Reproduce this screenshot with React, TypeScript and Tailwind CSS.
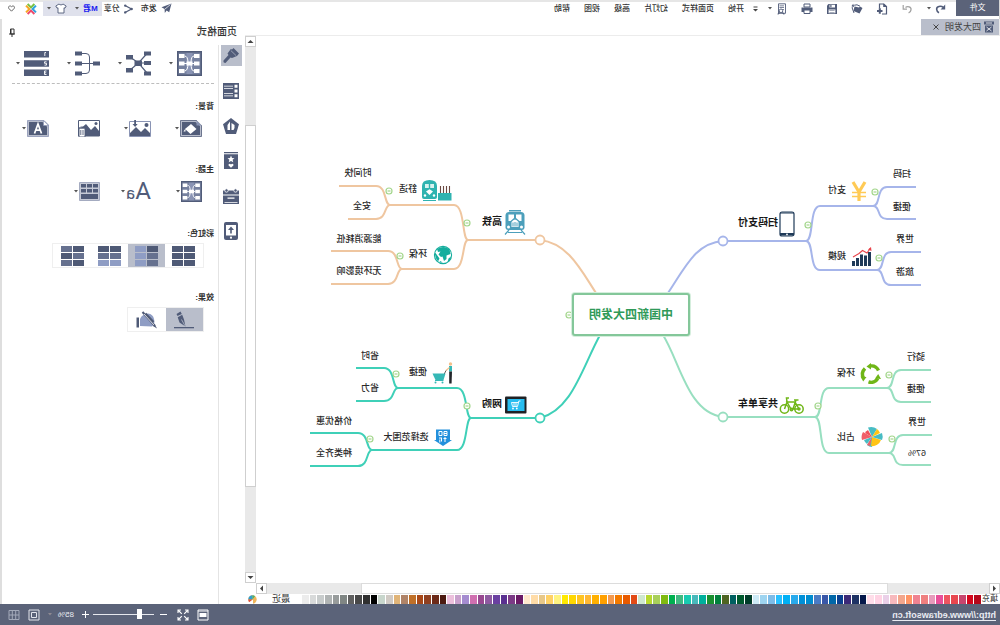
import React from "react";

const INK = "#515c79";

type IconProps = { w: number; h: number; box?: string; children: React.ReactNode };

function Icon({ w, h, box, children }: IconProps) {
  return (
    <svg width={w} height={h} viewBox={box ?? `0 0 ${w} ${h}`} fill={INK} className="block shrink-0" aria-hidden="true">
      {children}
    </svg>
  );
}

function Caret() {
  return (
    <Icon w={4} h={3}>
      <path d="M0 0h4L2 2.6z" fill="#555" />
    </Icon>
  );
}

/* ---------- top bar ---------- */

const quickIcons: { label: string; icon: React.ReactNode }[] = [
  {
    label: "新建",
    icon: (
      <Icon w={12} h={12}>
        <path d="M6 11H1.500V3.500L4.200 1H8.500V5.500" fill="none" stroke={INK} strokeWidth="1.200" />
        <path d="M1 4L4.800 0.600V4z" />
        <path d="M6 8h5.500M8.700 5.300v5.500" stroke={INK} strokeWidth="2" fill="none" transform="translate(-0.500 0)" />
      </Icon>
    ),
  },
  {
    label: "打开",
    icon: (
      <Icon w={12} h={12}>
        <path d="M0.500 5L3 3.500L4 4.500L8.500 3.500L9.500 8L3.500 10.500z" />
        <path d="M3 3.200L6 1.800L8.500 2.200L11 4.500L9 10" fill="none" stroke={INK} strokeWidth="1" />
        <path d="M9.800 0.800l1.800 2.400l-2.600 0.200z" />
      </Icon>
    ),
  },
  {
    label: "保存",
    icon: (
      <Icon w={12} h={12}>
        <path d="M1 1h8.500L11 2.500V11H1z" />
        <path d="M3 1.800h5.500V4.600H3zM2.600 6.400h6.800V10.200H2.600z" fill="#fff" />
        <path d="M6.500 2h1.200v2.200H6.500zM3.400 7.400h5.200v0.700H3.400zM3.400 8.900h5.200v0.700H3.400z" />
      </Icon>
    ),
  },
  {
    label: "打印",
    icon: (
      <Icon w={12} h={12}>
        <path d="M3 1h6v3H3z" fill="#fff" stroke={INK} strokeWidth="1" />
        <path d="M0.500 4.500h11V9H0.500z" />
        <path d="M3 7h6v3.500H3z" fill="#fff" stroke={INK} strokeWidth="1" />
      </Icon>
    ),
  },
  {
    label: "预览",
    icon: (
      <Icon w={12} h={12}>
        <path d="M2.500 0.800h7v9.500h-7z" fill="#fff" stroke={INK} strokeWidth="0.900" />
        <path d="M4 2.500h4.500v0.800H4zM4 4.200h4.500V5H4zM4 6h3v0.800H4z" />
        <circle cx="7" cy="7.800" r="1.800" fill="#fff" stroke={INK} strokeWidth="0.900" />
        <path d="M8.300 9.300l2 2M5.700 9.300l-2 2" stroke={INK} strokeWidth="1.100" />
      </Icon>
    ),
  },
];

function TopBar() {
  return (
    <header className="flex h-[19px] border-l border-[#d4d4d4] text-[8px] leading-4 text-[#333]">
      <button className="h-4 w-[43px] bg-[#5b6379] text-white">文件</button>
      <div className="flex min-w-0 flex-1 items-center border-t-2 border-[#e6e6e6] pb-1">
        <button aria-label="撤销" className="ml-[5px] flex w-5 justify-center">
          <Icon w={11} h={10}>
            <path d="M2.500 3.500C5 1.500 9.800 2 9.300 5.500C9.200 7 8 8.300 7 8.800" fill="none" stroke={INK} strokeWidth="1.600" />
            <path d="M0.800 0.600V5.500H5.400z" />
          </Icon>
        </button>
        <button aria-label="撤销列表" className="flex w-1 justify-center">
          <Caret />
        </button>
        <button aria-label="恢复" className="ml-2 flex w-[22px] justify-center">
          <Icon w={11} h={10}>
            <path d="M7.500 3.500C5.500 1.800 1.500 3 2 5.800C2.200 7.500 3.400 8.400 4.400 8.800" fill="none" stroke="#a2a2a2" strokeWidth="1.300" />
            <path d="M9.800 1V5.200H6" fill="none" stroke="#a2a2a2" strokeWidth="1.200" />
          </Icon>
        </button>
        <div className="ml-0.5 flex">
          {quickIcons.map((q) => (
            <button key={q.label} aria-label={q.label} className="flex w-[25px] justify-center">
              {q.icon}
            </button>
          ))}
        </div>
        <button aria-label="预览列表" className="-ml-0.5 flex w-1 justify-center">
          <Caret />
        </button>
        <button aria-label="更多" className="flex w-6 justify-center">
          <Icon w={5} h={6}>
            <path d="M0.500 0.500h4v1h-4zM0 3h5L2.500 5.500z" fill="#444" />
          </Icon>
        </button>
        <nav className="flex gap-3.5">
          {["开始", "页面样式", "幻灯片", "高级", "视图", "帮助"].map((m) => (
            <button key={m} className="font-medium whitespace-nowrap">
              {m}
            </button>
          ))}
        </nav>
        <div className="ml-auto flex items-center pr-1">
          <button className="flex items-center gap-1 font-medium whitespace-nowrap">
            <Icon w={11} h={11}>
              <path d="M10.500 0.500L0.500 4.200L3.600 6L3.800 10L5.600 7.400L8.200 9.200z" transform="translate(11 0) scale(-1 1)" />
              <path d="M1.500 1.500L7.200 6.200" stroke="#fff" strokeWidth="0.700" />
            </Icon>
            发布
          </button>
          <button className="ml-2 flex items-center gap-1 font-medium whitespace-nowrap">
            <Icon w={9} h={10}>
              <path d="M8 1.500L1.500 5L8 8.500" fill="none" stroke={INK} strokeWidth="1.300" />
              <circle cx="7.800" cy="1.600" r="1.200" />
              <circle cx="1.500" cy="5" r="1.300" />
              <circle cx="7.800" cy="8.400" r="1.200" />
            </Icon>
            分享
          </button>
          <div className="ml-0.5 flex h-[15px] items-center bg-[#dfe1ec] px-1">
            <button className="flex items-center gap-1 font-bold whitespace-nowrap text-[#1c1cf0]">
              M君 <Caret />
            </button>
            <button aria-label="皮肤" className="ml-2 flex items-center gap-1">
              <Icon w={12} h={11}>
                <path
                  d="M4 1C5 2.200 7 2.200 8 1L11.200 3L10 5.200L9 4.800V10H3V4.800L2 5.200L0.800 3z"
                  fill="#fff"
                  stroke={INK}
                  strokeWidth="0.900"
                />
              </Icon>
              <Caret />
            </button>
          </div>
          <button aria-label="亿图" className="ml-1.5">
            <Icon w={12} h={12}>
              <g fill="none" strokeWidth="2">
                <path d="M2.600 1L6 4.400L9.400 1" stroke="#7ac143" />
                <path d="M11 2.600L7.600 6L11 9.400" stroke="#f7a823" />
                <path d="M2.600 11L6 7.600L9.400 11" stroke="#ef4a6b" />
                <path d="M1 2.600L4.400 6L1 9.400" stroke="#2fa4e0" />
              </g>
            </Icon>
          </button>
          <button aria-label="收藏" className="mr-1 ml-2.5">
            <Icon w={7} h={7}>
              <path d="M3.500 6.200L0.800 3.400C-0.200 1.600 2 -0.200 3.500 1.800C5 -0.200 7.200 1.600 6.200 3.400z" fill="none" stroke="#555" strokeWidth="0.900" />
            </Icon>
          </button>
        </div>
      </div>
    </header>
  );
}

/* ---------- mind map ---------- */

type Fork = { x: number; y: number; dir: 1 | -1; arms: [number, number][] };
type Branch = { color: string; hub: [number, number]; link: string; forks: Fork[] };

const branches: Branch[] = [
  {
    color: "#a6b5ea",
    hub: [277, 241],
    link: "M277 241C304 243 314 266 332 293",
    forks: [
      { x: 194, y: 241, dir: -1, arms: [[206, 127], [270, 123]] },
      { x: 127, y: 206, dir: -1, arms: [[187, 84], [219, 84]] },
      { x: 123, y: 270, dir: -1, arms: [[252, 79], [285, 79]] },
    ],
  },
  {
    color: "#98dfc0",
    hub: [277, 417],
    link: "M277 417C312 413 320 362 337 335",
    forks: [
      { x: 185, y: 417, dir: -1, arms: [[388, 113], [453, 111]] },
      { x: 113, y: 388, dir: -1, arms: [[370, 69], [402, 69]] },
      { x: 111, y: 453, dir: -1, arms: [[435, 68], [465, 69]] },
    ],
  },
  {
    color: "#efc6a0",
    hub: [460, 240],
    link: "M460 240C432 243 419 270 404 293",
    forks: [
      { x: 532, y: 240, dir: 1, arms: [[205, 610], [269, 598]] },
      { x: 610, y: 205, dir: 1, arms: [[186, 661], [219, 652]] },
      { x: 598, y: 269, dir: 1, arms: [[251, 669], [284, 669]] },
    ],
  },
  {
    color: "#3fd0b8",
    hub: [460, 418],
    link: "M460 418C428 410 418 368 400 335",
    forks: [
      { x: 529, y: 418, dir: 1, arms: [[388, 602], [450, 628]] },
      { x: 602, y: 388, dir: 1, arms: [[368, 644], [401, 644]] },
      { x: 628, y: 450, dir: 1, arms: [[433, 690], [466, 690]] },
    ],
  },
];

function armPath(f: Fork, y: number, end: number) {
  const d = f.dir;
  return `M${f.x} ${f.y}C${f.x - 1 + 7 * d} ${f.y} ${f.x + 3 * d} ${y} ${f.x + 14 * d} ${y}H${end}`;
}

const topics: [string, number, number][] = [
  ["扫码支付", 242, 223],
  ["共享单车", 242, 404],
  ["高铁", 508, 222],
  ["网购", 508, 404],
];

const subtopics: [string, number, number][] = [
  ["支付", 163, 190],
  ["扫码", 98, 174],
  ["便捷", 98, 207],
  ["规模", 163, 256],
  ["世界", 95, 239],
  ["旅游", 95, 272],
  ["环保", 154, 373],
  ["骑行", 84, 357],
  ["便捷", 84, 389],
  ["占比", 154, 437],
  ["世界", 83, 422],
  ["67%", 83, 453],
  ["舒适", 592, 189],
  ["时间快", 642, 173],
  ["安全", 638, 206],
  ["环保", 582, 254],
  ["能源消耗低", 641, 239],
  ["无环境影响", 641, 271],
  ["便捷", 582, 372],
  ["省时", 630, 356],
  ["省力", 630, 388],
  ["选择范围大", 594, 437],
  ["价格优惠", 666, 421],
  ["种类齐全", 666, 453],
];

const toggles: [number, number][] = [
  [192, 225], [125, 192], [121, 258], [182, 406], [111, 375], [108, 439],
  [533, 223], [611, 191], [600, 256], [533, 406], [604, 374], [630, 439], [431, 315],
];

const CANVAS_TOP = 36;

function TopicIcons() {
  return (
    <>
      <g transform="translate(213 224)">
        <rect x="-7" y="-12" width="14" height="24" rx="2" fill="#fff" stroke="#1f3a58" strokeWidth="1.200" />
        <path d="M-7 -11.500h14v1h-14zM-7 9h14v2.500h-14z" fill="#1f3a58" />
        <circle cy="10.400" r="0.900" fill="#fff" />
      </g>
      <g transform="translate(141 191)" fill="none" stroke="#ffca55">
        <path d="M-6 -9L0 1L6 -9M0 0V10" strokeWidth="3.200" />
        <path d="M-7 1.500H7M-7 5.500H7" strokeWidth="1.700" />
      </g>
      <g transform="translate(138 257)">
        <path d="M-9 -5h3V9h-3zM-5 -1.500h3V9h-3zM-1 -2.500h3V9h-3zM3 1h3V9h-3zM7 4h3V9h-3z" fill="#1f3a58" />
        <path d="M-8.500 -9L-5 -4L-0.500 -6.500L3 -3.500L9 0" fill="none" stroke="#e8434a" strokeWidth="1.100" />
        <path d="M-9 -10l-0.500 4l3.500 -1.500z" fill="#e8434a" />
      </g>
      <g transform="translate(208 406)" fill="none" stroke="#6fb617" strokeWidth="1.500">
        <circle cx="-7" cy="3" r="4.200" />
        <circle cx="7.500" cy="3" r="4.200" />
        <path d="M-7 3L-3 -4H5L1 3H-7M5 -4L7.500 3M-1 3L-4 -6M-6.500 -6H-2M3 -8H5.500L5 -4" />
        <circle cx="-7" cy="3" r="1" />
        <circle cx="0.500" cy="3.500" r="1.200" />
      </g>
      <g transform="translate(129 374)" fill="none" stroke="#6fb617" strokeWidth="3.400">
        <path d="M-7.500 -3.500A8 8 0 0 1 1 -8" />
        <path d="M6 -5.500A8 8 0 0 1 7.500 4" />
        <path d="M2.500 7.900A8 8 0 0 1 -6.800 4.500" />
        <g fill="#6fb617" stroke="none">
          <path d="M0 -11L4.500 -7.500L0 -4.500z" />
          <path d="M4.500 3L10.500 2.500L7.800 7.500z" />
          <path d="M-10 5L-7.200 0L-4 4.500z" />
        </g>
      </g>
      <g transform="translate(128 437)">
        <path d="M0 0L-5 -8A9.500 9.500 0 0 1 4 -9.500z" fill="#48bcc4" />
        <path d="M0 0L4 -7A8 8 0 0 1 7 -4z" fill="#f0505a" />
        <path d="M0 0L9 -5A10 10 0 0 1 10 3z" fill="#f0606a" />
        <path d="M0 0L8 3A8 8 0 0 1 5 7z" fill="#48bcc4" />
        <path d="M0 0L5 8A9 9 0 0 1 0 10z" fill="#48bcc4" />
        <path d="M0 0L1 9A9 9 0 0 1 -9 3z" fill="#ffc414" />
        <path d="M0 0L-10 3A10 10 0 0 1 -10 -4z" fill="#48bcc4" />
        <path d="M0 0L-8 -4A9 9 0 0 1 -5 -8z" fill="#ffc414" />
        <path d="M0 0L5 8L2 9z" fill="#f0606a" />
      </g>
      <g transform="translate(485 222)" fill="#4c9fbb">
        <path d="M-6 -12h12v1.500h-12z" />
        <path d="M-9.500 -7Q-9 -10 -6 -10H6Q9 -10 9.500 -7V6Q9 8 7 8H-7Q-9 8 -9.500 6z" />
        <path d="M-6.500 -7.500H-1V-4L-4.500 -1H-6.500zM6.500 -7.500H1V-4L4.500 -1H6.500zM-3.500 0Q0 -5 3.500 0V5H-3.500z" fill="#fff" />
        <path d="M-2.500 0.500h1v4h-1zM-0.500 0h1v4.500h-1zM1.500 0.500h1v4h-1z" />
        <circle cx="-6.500" cy="5" r="1.500" fill="#fff" />
        <circle cx="6.500" cy="5" r="1.500" fill="#fff" />
        <path d="M-6 8L-10 12.500M6 8L10 12.500M-7 10.500H7" fill="none" stroke="#4c9fbb" strokeWidth="1.200" />
      </g>
      <g transform="translate(563 190)">
        <path d="M-14.500 3H-1V10.500H-14.500z" fill="#2fb3b0" />
        <path d="M-12.500 -4V3M-9.500 -4V3M-6.500 -4V3M-3.500 -4V3" stroke="#6b4a42" strokeWidth="1.100" />
        <path d="M0 7V-4Q0 -10 7.500 -10Q15 -10 15 -4V7Q15 9 13 9H2Q0 9 0 7z" fill="#2fb3b0" />
        <path d="M3 -6H6.800V-2H3zM8.200 -6H12V-2H8.200z" fill="#d8f3f0" />
        <path d="M4 1.500L7.500 -0.800L11 1.500L7.500 5z" fill="#fff" />
        <circle cx="3" cy="5.500" r="1.200" fill="#fff" />
        <circle cx="12" cy="5.500" r="1.200" fill="#fff" />
        <path d="M1 10.500H14" stroke="#2fb3b0" strokeWidth="1" />
      </g>
      <g transform="translate(557 255)">
        <circle r="8.600" fill="#fff" stroke="#14ad9d" strokeWidth="1.100" />
        <path d="M-6.500 -5.500Q-1 -10 6 -6L5 -3L2.500 -3.500L4.500 -0.500L2 2L0.500 1.500L-1 6L-3.500 4L-3.500 0.500L-7.500 -1z" fill="#14ad9d" />
        <path d="M7.800 -2.500Q8.800 2 5 6.500L3.500 3.500zM-8 1.500L-5.500 3.500L-4.500 7Q-7.500 5.500 -8 1.500zM0 7.500L3 6L3.500 7.500z" fill="#14ad9d" />
      </g>
      <g transform="translate(484 405)">
        <rect x="-10.500" y="-8.500" width="21.500" height="17" rx="1" fill="#1f2124" />
        <rect x="-8.500" y="-6" width="17" height="12" fill="#27bdf0" />
        <path d="M-4.500 -4H-2.800L-1.500 1.500H3.500L4.500 -2.500H-2.400M0 -2V1M2 -2V1" fill="none" stroke="#fff" strokeWidth="0.900" />
        <circle cx="-0.800" cy="3.500" r="0.900" fill="#fff" />
        <circle cx="3" cy="3.500" r="0.900" fill="#fff" />
      </g>
      <g transform="translate(558 373)">
        <circle cx="-8.500" cy="-9" r="1.700" fill="#f4c08b" />
        <path d="M-10 -7h3v5.500h-3z" fill="#35b8b6" />
        <path d="M-7.500 -5.500L-4 -2.500" stroke="#f4c08b" strokeWidth="1.200" />
        <path d="M-10 -1.500h2.800V10.500h-2.400z" fill="#23262b" />
        <path d="M-4 -2.500L-2 1.500" stroke="#333" strokeWidth="0.800" />
        <path d="M-3.500 0.500H9.500L6.500 7H-1.500z" fill="#35b8b6" />
        <path d="M-1.500 7.500H7" stroke="#35b8b6" strokeWidth="1" />
        <circle cx="-0.500" cy="9.500" r="1" fill="#35b8b6" />
        <circle cx="6.500" cy="9.500" r="1" fill="#35b8b6" />
      </g>
      <g transform="translate(557 437)">
        <path d="M-7 -7.500H7V3H9L0 9L-9 3H-7z" fill="#2290dc" />
        <g fill="none" stroke="#fff" strokeWidth="1">
          <path d="M-4 -5.500h3v2h-3zM-4 -3.500h3v2h-3zM1 -5.500h3v4h-3z" />
          <path d="M-3.500 1.500h3M-2 0v5M1 1h3M1.500 1v3.500M3.200 2.500v3" />
        </g>
      </g>
    </>
  );
}

function MindMap() {
  return (
    <div className="relative h-[547px] w-[744px]">
      <svg width="744" height="547" viewBox="0 36 744 547" className="block" aria-hidden="true">
        {branches.map((b) => (
          <g key={b.color} fill="none" stroke={b.color} strokeWidth="2">
            <path d={b.link} />
            <path d={`M${b.hub[0]} ${b.hub[1]}H${b.forks[0].x}`} />
            {b.forks.map((f) => f.arms.map(([y, end]) => <path key={`${f.x}-${y}`} d={armPath(f, y, end)} />))}
            <circle cx={b.hub[0]} cy={b.hub[1]} r="4.500" fill="#fff" strokeWidth="1.800" />
          </g>
        ))}
        {toggles.map(([x, y]) => (
          <g key={`${x}-${y}`} fill="#fff" stroke="#a3d68c" strokeWidth="1.200">
            <circle cx={x} cy={y} r="3" />
            <path d={`M${x - 1.5} ${y}h3`} />
          </g>
        ))}
        <TopicIcons />
      </svg>
      <div className="absolute top-[257px] left-[310px] flex h-[43px] w-[118px] items-center justify-center rounded-[3px] border-2 border-[#84c79a] bg-white text-[12px] font-bold whitespace-nowrap text-[#2f9a58] ring-1 ring-[#d5eedd]">
        中国新四大发明
      </div>
      {topics.map(([t, x, y]) => (
        <span
          key={t}
          className="absolute -translate-x-1/2 -translate-y-1/2 text-[10px] leading-3 font-bold whitespace-nowrap text-[#161616]"
          style={{ left: x, top: y - CANVAS_TOP }}
        >
          {t}
        </span>
      ))}
      {subtopics.map(([t, x, y]) => (
        <span
          key={`${t}${x}-${y}`}
          className="absolute -translate-x-1/2 -translate-y-1/2 text-[9px] leading-3 font-medium whitespace-nowrap text-[#2a2a2a]"
          style={{ left: x, top: y - CANVAS_TOP }}
        >
          {t}
        </span>
      ))}
    </div>
  );
}

/* ---------- workspace ---------- */

function ScrollButton({ label, d }: { label: string; d: string }) {
  return (
    <button aria-label={label} className="flex size-[11px] shrink-0 items-center justify-center border border-[#cfcfcf] bg-white">
      <Icon w={7} h={7}>
        <path d={d} fill="#444" />
      </Icon>
    </button>
  );
}

const swatches = [
  "#b5071b", "#d4061c", "#c8466e", "#e8474f", "#ee5560", "#e8509a", "#e79abb", "#ef7f7f", "#ef8391", "#ff9566",
  "#f3a68c", "#f7b9bd", "#ead0e8", "#ffd3e4", "#ffdde9", "#05184a", "#1e3264", "#3c2a78", "#0a4090", "#0067a8",
  "#3957a8", "#4a7bc4", "#008ccf", "#0090d8", "#28aaec", "#00b0f5", "#28c0ff", "#7dbce8", "#9ed4f0", "#cdeaf6",
  "#003c28", "#005a2d", "#006060", "#4f6422", "#00803c", "#1a9030", "#00b09c", "#48b9bb", "#18cab0", "#40b880",
  "#00b050", "#80ba10", "#a8cf5a", "#b8d830", "#cfe8cf", "#e24a16", "#e85a00", "#f37a00", "#f39a50", "#ffa000",
  "#ffb000", "#ffb833", "#ffc422", "#ffd700", "#ffe900", "#fff380", "#ffd166", "#e8c888", "#ffdca8", "#ffe8cc",
  "#6a1a66", "#7c3a86", "#5a3090", "#6a40a0", "#8e5aa0", "#984890", "#d070b0", "#a58cd0", "#c8a0cc", "#ecc0dc",
  "#4c1a10", "#6c2a18", "#904020", "#a84818", "#c07028", "#b08468", "#e0b478", "#d0cac4", "#c8d6cc", "#000000",
  "#303030", "#484848", "#606060", "#808684", "#989c9c", "#b0b4b4", "#c8cccc", "#d8dada", "#ececec",
];

function Workspace() {
  return (
    <main className="flex min-w-0 flex-1 flex-col">
      <div className="flex h-[17px] border-b border-l border-[#ececec]">
        <div className="flex h-4 w-[78px] items-center bg-[#b9becb] pl-1 text-[9px] leading-4 text-[#444]">
          <Icon w={12} h={12}>
            <path d="M1 0.500h10v3h-10zM2 4.500h8v7H2z" />
            <path d="M3.500 6L8.500 10M8.500 6L3.500 10M3 2h6" stroke="#fff" strokeWidth="0.800" />
          </Icon>
          <span className="ml-0.5 whitespace-nowrap">四大发明</span>
          <button aria-label="关闭" className="ml-1.5">
            <Icon w={6} h={6}>
              <path d="M0.500 0.500L5.500 5.500M5.500 0.500L0.500 5.500" stroke="#444" strokeWidth="1" />
            </Icon>
          </button>
        </div>
      </div>
      <div className="flex flex-1">
        <div className="min-w-0 flex-1 overflow-hidden">
          <MindMap />
        </div>
        <div className="flex w-[11px] flex-col bg-[#e9e9e9]">
          <ScrollButton label="向上" d="M0.500 5L3.500 2L6.500 5z" />
          <div className="flex-[78]" />
          <div className="flex-[362] border border-[#cfcfcf] bg-white" />
          <div className="flex-[85]" />
          <ScrollButton label="向下" d="M0.500 2L3.500 5L6.500 2z" />
        </div>
      </div>
      <div className="mr-[11px] flex h-[11px] bg-[#e9e9e9]">
        <ScrollButton label="向左" d="M5 0.500L2 3.500L5 6.500z" />
        <div className="flex-[101]" />
        <div className="flex-[526] border border-[#dcdcdc] bg-white" />
        <div className="flex-[94]" />
        <ScrollButton label="向右" d="M2 0.500L5 3.500L2 6.500z" />
      </div>
      <div className="flex h-2.5 items-center text-[8px] leading-[10px] text-[#333]">
        <span className="w-[19px] pl-0.5 whitespace-nowrap">填充</span>
        <div className="flex h-[9px] flex-1 gap-px">
          {swatches.map((c) => (
            <button key={c} aria-label={c} className="h-full flex-1" style={{ backgroundColor: c }} />
          ))}
        </div>
        <div className="flex w-[57px] items-center justify-between pr-[3px] pl-3 text-[9px]">
          <span>最近</span>
          <button aria-label="调色板">
            <Icon w={9} h={9}>
              <circle cx="4.500" cy="4.500" r="4.200" fill="#f0b65a" />
              <path d="M4.500 4.500V0.300A4.200 4.200 0 0 1 8.700 4.500z" fill="#2f9fd0" />
              <path d="M4.500 4.500H8.700A4.200 4.200 0 0 1 7.500 7.500z" fill="#e24c3b" />
              <path d="M4.500 4.500L2 1.200A4.200 4.200 0 0 1 4.500 0.300z" fill="#45b072" />
              <path d="M4 4.500L9 8V9H4z" fill="#fff" />
            </Icon>
          </button>
        </div>
      </div>
    </main>
  );
}

/* ---------- format panel ---------- */

const stripTools: { label: string; icon: React.ReactNode }[] = [
  {
    label: "页面格式",
    icon: (
      <Icon w={18} h={18}>
        <path d="M1 6.500L6.500 1L8 2.500L9.200 2L12.500 6.500L11.500 8L16.500 13.500Q17 16 14.500 16L9.500 10.500L8 11L3 9z" />
        <path d="M9.200 3.500L3.800 8.700" stroke="#b9becb" strokeWidth="0.700" />
      </Icon>
    ),
  },
  {
    label: "图层",
    icon: (
      <Icon w={16} h={16}>
        <path d="M0 0h16v16H0z" />
        <path d="M1.500 1.800h3v3h-3zM1.500 6.500h3v3h-3zM1.500 11.200h3v3h-3zM6 2.800h9v0.800H6zM6 5.200h9V6H6zM6 10h9v0.800H6zM6 12.500h9v0.800H6z" fill="#fff" />
      </Icon>
    ),
  },
  {
    label: "图标",
    icon: (
      <Icon w={16} h={16}>
        <path d="M8 0L16 6.200L13 16H3L0 6.200z" />
        <path d="M9 3.500L11.500 7V12H9zM4.500 7L7.500 5V12H5.500Q4 10 4.500 7z" fill="#fff" />
      </Icon>
    ),
  },
  {
    label: "剪贴画",
    icon: (
      <Icon w={14} h={17}>
        <path d="M0 0h14v1.200H0zM0 2.200h14V17H0z" />
        <path d="M7 3.500L8 6L10.500 6.200L8.600 7.800L9.300 10.200L7 9L4.700 10.200L5.400 7.800L3.500 6.200L6 6zM7 15.800L4.600 13.500C4 11.800 6 11 7 12.500C8 11 10 11.800 9.400 13.500z" fill="#fff" />
      </Icon>
    ),
  },
  {
    label: "任务",
    icon: (
      <Icon w={16} h={16}>
        <path d="M0 2.500h16v4H0zM0 7.500h16V16H0z" />
        <path d="M4.500 9.500h7v1.200h-7zM1.500 14h13v0.700h-13z" fill="#fff" />
        <circle cx="3.500" cy="2.500" r="1.700" stroke="#fff" strokeWidth="0.800" />
        <circle cx="12.500" cy="2.500" r="1.700" stroke="#fff" strokeWidth="0.800" />
      </Icon>
    ),
  },
  {
    label: "附件",
    icon: (
      <Icon w={14} h={18}>
        <rect width="14" height="18" rx="2" />
        <path d="M2 3h10v10.500H2z" fill="#fff" />
        <path d="M7 4.500L10 8H7.800V11.500H6.200V8H4z" />
        <circle cx="7" cy="15.700" r="1.100" fill="#fff" />
      </Icon>
    ),
  },
];

function LayoutGlyph({ size }: { size: number }) {
  return (
    <Icon w={size} h={size} box="0 0 25 25">
      <path d="M0 0h25v25H0z" />
      <path d="M1.500 1.500h22v22h-22z" fill="#76819f" />
      <path d="M9.500 2h6v21h-6z" fill="#8a94b4" />
      <path d="M2.500 3h5.500v4H2.500zM2.500 10.500h5.500v4H2.500zM2.500 18h5.500v4H2.500zM17.500 3h5.500v4h-5.500zM17.500 10.500h5.500v4h-5.500zM17.500 18h5.500v4h-5.500zM9.500 10.500h6v4h-6z" fill="#fff" />
      <path d="M8 5Q11 5 11 12Q11 20 8 20M17.500 5Q14 5 14 12Q14 20 17.500 20M8 12.500H18" fill="none" stroke="#fff" strokeWidth="1" />
    </Icon>
  );
}

type Tool = { label: string; icon: React.ReactNode; plain?: boolean };

const layoutTools: Tool[] = [
  { label: "布局", icon: <LayoutGlyph size={25} /> },
  {
    label: "连线样式",
    icon: (
      <Icon w={25} h={25}>
        <path d="M4 2.500L12.500 12L21 6M4 22L12.500 12L21 19M4 12H12" fill="none" stroke={INK} strokeWidth="1.200" />
        <path d="M0 0.500h7v4H0zM0 10h7v4H0zM0 20.500h7v4H0zM18 4h7v4.500h-7zM18 17h7v4.500h-7zM9 9.500h7.500v5.500H9z" />
      </Icon>
    ),
  },
  {
    label: "分支结构",
    icon: (
      <Icon w={25} h={25}>
        <path d="M5 12.500H20M19 2.500H14Q10.500 2.500 10.500 6V19Q10.500 22.500 14 22.500H19" fill="none" stroke={INK} strokeWidth="1" />
        <path d="M0 10.500h7v4H0zM18 0.500h7v4h-7zM18 10.500h7v4h-7zM18 20.500h7v4h-7z" />
      </Icon>
    ),
  },
  {
    label: "编号",
    icon: (
      <Icon w={25} h={25}>
        <path d="M0 0h25v6.500H0zM0 9.300h25v6.500H0zM0 18.500h25V25H0z" />
        <path d="M3 1.500h1.200v3.500M2.500 10.800h2v1.500h-2v1.800h2M2.500 20h2v3.500h-2M2.800 21.800h1.600" fill="none" stroke="#fff" strokeWidth="0.900" />
      </Icon>
    ),
  },
];

const backgroundTools: Tool[] = [
  {
    label: "背景颜色",
    icon: (
      <Icon w={22} h={17}>
        <path d="M0.500 5L5 0.500H21.500V16.500H0.500z" fill="#b7bccb" stroke={INK} strokeWidth="0.800" />
        <path d="M2 6L6.500 2H20V15H2z" />
        <path d="M5.500 9L11 4L17 9L11.500 14z" fill="#fff" />
        <path d="M16.500 8.500l2 3h-2z" fill="#fff" />
        <path d="M0 0H5.500L0 5.500z" fill="#fff" />
        <path d="M0.600 5.500L5.500 0.600V5.500z" fill="#8a94b4" />
      </Icon>
    ),
  },
  {
    label: "插入图片",
    icon: (
      <Icon w={22} h={17}>
        <path d="M0.500 1.500h21v15H0.500z" fill="#fff" stroke="#8a94b4" strokeWidth="1" />
        <path d="M1 16V13L6 8L10 12L15 7L21 13V16z" />
        <circle cx="4.500" cy="5" r="2" />
        <path d="M15 0h1.800v4h1.700L15.900 7L13.300 4H15z" />
      </Icon>
    ),
  },
  {
    label: "移除背景",
    plain: true,
    icon: (
      <Icon w={22} h={17}>
        <path d="M0.500 0.500h21v15.500H0.500z" fill="#fff" stroke={INK} strokeWidth="1" />
        <path d="M1 16V11L5 6L9 10L14 4L21 10V16z" />
        <circle cx="4" cy="3.500" r="1.500" />
        <path d="M15 8h6v9h-6z" fill="#fff" stroke={INK} strokeWidth="0.900" />
        <path d="M14 8h8M16.500 7h3M17 10v5M19.200 10v5" stroke={INK} strokeWidth="0.900" />
      </Icon>
    ),
  },
  {
    label: "水印",
    icon: (
      <Icon w={22} h={17}>
        <path d="M0.500 5L5 0.500H21.500V16.500H0.500z" fill="#b7bccb" stroke="#8a94b4" strokeWidth="0.800" />
        <path d="M2 6.500L6.500 2H20V15H2z" />
        <path d="M7.500 13.500L11 4L14.500 13.500M9 10.200H13" fill="none" stroke="#fff" strokeWidth="1.700" />
        <path d="M0.600 5.500L5.500 0.600V5.500z" fill="#fff" stroke="#8a94b4" strokeWidth="0.700" />
      </Icon>
    ),
  },
];

const themeTools: Tool[] = [
  { label: "主题样式", icon: <LayoutGlyph size={21} /> },
  {
    label: "主题字体",
    icon: (
      <span className="flex h-6 items-baseline font-['Roboto',sans-serif] leading-6 text-[#515c79]">
        <span className="text-[24px]">A</span>
        <span className="text-[17px]">a</span>
      </span>
    ),
  },
  {
    label: "主题颜色",
    icon: (
      <Icon w={21} h={19}>
        <path d="M0.500 0.500h20v18h-20z" fill="#c6cad6" stroke="#a4abc0" strokeWidth="1" />
        <path d="M2 2h5v3.500H2zM8 2h5v3.500H8zM14 2h5v3.500h-5zM2 7h5v3.500H2zM8 7h5v3.500H8zM14 7h5v3.500h-5zM2 12h17v5H2z" />
      </Icon>
    ),
  },
];

function ToolRow({ tools, wide }: { tools: Tool[]; wide?: boolean }) {
  return (
    <div className="flex h-[26px] items-center pl-4">
      {tools.map((t) => (
        <button
          key={t.label}
          aria-label={t.label}
          className={
            wide ? "flex w-[51px] shrink-0 items-center gap-1" : "flex w-[51px] shrink-0 items-center gap-px"
          }
        >
          {t.icon}
          {!t.plain && <Caret />}
        </button>
      ))}
    </div>
  );
}

const D = "#4f5a76";
const M = "#66718f";
const L = "#8f9dc4";

const rainbow: string[][] = [
  [D, D, D, D, D, D],
  [D, L, M, L, M, L],
  [D, D, M, M, L, L],
  [D, M, M, D, D, M],
];

function SectionTitle({ children }: { children: React.ReactNode }) {
  return <h3 className="pl-1 text-[8px] leading-3 font-bold text-[#333]">{children}</h3>;
}

function FormatPanel() {
  return (
    <aside className="flex w-[245px] shrink-0 flex-col border-r-2 border-[#dedede]">
      <div className="flex h-[26px] items-center justify-between pr-1.5 pl-2">
        <h2 className="text-[10px] leading-4 font-medium text-[#333]">页面格式</h2>
        <button aria-label="固定">
          <Icon w={8} h={9}>
            <path d="M2 1h3.500v5H2zM1 6h6M4 6v3M5 1v5" fill="none" stroke="#333" strokeWidth="1" />
          </Icon>
        </button>
      </div>
      <div className="flex flex-1">
        <div className="flex w-[27px] flex-col items-center gap-3.5 border-r border-[#e4e4e4] pl-px">
          {stripTools.map((t, i) => (
            <button
              key={t.label}
              aria-label={t.label}
              className={
                i === 0
                  ? "flex h-[21px] w-[21px] items-center justify-center bg-[#b9becb]"
                  : "flex h-[21px] w-[21px] items-center justify-center"
              }
            >
              {t.icon}
            </button>
          ))}
        </div>
        <div className="min-w-0 flex-1">
          <div className="pt-[5px]">
            <ToolRow tools={layoutTools} wide />
          </div>
          <div className="mt-[7px] mr-2.5 ml-1 border-t border-dashed border-[#bdbdbd]" />
          <section className="pt-[17px]">
            <SectionTitle>背景:</SectionTitle>
            <div className="pt-0.5">
              <ToolRow tools={backgroundTools} />
            </div>
          </section>
          <section className="pt-[23px]">
            <SectionTitle>主题:</SectionTitle>
            <div className="pt-0.5">
              <ToolRow tools={themeTools} />
            </div>
          </section>
          <section className="pt-6">
            <SectionTitle>彩虹色:</SectionTitle>
            <div className="mt-[3px] ml-3.5 flex w-fit border border-[#efefef] px-px">
              {rainbow.map((cells, i) => (
                <button
                  key={i}
                  aria-label={`彩虹色 ${i + 1}`}
                  className={
                    i === 1
                      ? "flex h-[23px] w-[37px] items-center justify-center bg-[#b9becb]"
                      : "flex h-[23px] w-[37px] items-center justify-center"
                  }
                >
                  <span className="grid grid-cols-2 gap-px">
                    {cells.map((c, k) => (
                      <span key={k} className="h-1.5 w-[11px]" style={{ backgroundColor: c }} />
                    ))}
                  </span>
                </button>
              ))}
            </div>
          </section>
          <section className="pt-6">
            <SectionTitle>效果:</SectionTitle>
            <div className="mt-[3px] ml-3.5 flex w-fit border border-[#efefef]">
              <button aria-label="钢笔效果" className="flex h-[23px] w-[37px] items-center justify-center bg-[#b9becb]">
                <Icon w={22} h={18}>
                  <path d="M1 16h20v1.300H1z" />
                  <path d="M14.500 0.500L18.500 3L17.500 5L13.200 3zM12.800 3.800L17.300 6.200L15.500 11.500L9.500 15.500L11 8.500z" />
                  <path d="M9.800 15.200L13.500 8.500" stroke="#b9becb" strokeWidth="0.800" />
                </Icon>
              </button>
              <button aria-label="手绘效果" className="flex h-[23px] w-[38px] items-center justify-center">
                <Icon w={22} h={18}>
                  <path d="M4 8Q5 3 10 2.500Q16 3 18 8V15L6 15.500Q2.500 13 4 8z" fill="#8f9dc4" />
                  <path d="M19 6.500h2.500v10H19z" fill="#4f5a76" />
                  <path d="M15.500 1L3 15M12.500 2.500L4.500 11" stroke="#4f5a76" strokeWidth="2" />
                  <path d="M14 3L4 14" stroke="#fff" strokeWidth="0.800" />
                  <path d="M3.500 13L1 17.500L5 15z" fill="#4f5a76" />
                </Icon>
              </button>
            </div>
          </section>
        </div>
      </div>
    </aside>
  );
}

/* ---------- status bar ---------- */

function StatusBar() {
  return (
    <footer className="flex h-[21px] items-center bg-[#5b6379] pr-2 pl-1 text-[#e9ebf2]">
      <a
        href="http://www.edrawsoft.cn"
        className="font-['Liberation_Sans',sans-serif] text-[9px] leading-3 font-bold underline underline-offset-2"
      >
        http://www.edrawsoft.cn
      </a>
      <div className="ml-auto flex items-center">
        <button aria-label="适应窗口">
          <Icon w={12} h={12}>
            <path d="M1 1h10v10H1z" fill="none" stroke="#fff" strokeWidth="1" />
            <path d="M2.500 4h7v4h-7z" fill="#fff" />
            <path d="M1 2.200h10" stroke="#fff" strokeWidth="0.700" />
          </Icon>
        </button>
        <button aria-label="全屏" className="ml-2">
          <Icon w={12} h={12}>
            <path d="M1 4V1H4M8 1H11V4M11 8V11H8M4 11H1V8M1.500 1.500L4.800 4.800M10.500 1.500L7.200 4.800M10.500 10.500L7.200 7.200M1.500 10.500L4.800 7.200" fill="none" stroke="#fff" strokeWidth="1.100" />
          </Icon>
        </button>
        <button aria-label="缩小" className="ml-2.5">
          <Icon w={7} h={7}>
            <path d="M0 3h7v1H0z" fill="#fff" />
          </Icon>
        </button>
        <input
          type="range"
          aria-label="缩放"
          min={0}
          max={100}
          defaultValue={22}
          className="mr-1 ml-1.5 h-2.5 w-[61px] appearance-none bg-transparent [&::-webkit-slider-runnable-track]:h-px [&::-webkit-slider-runnable-track]:bg-[#e6e8ee] [&::-webkit-slider-thumb]:-mt-[5px] [&::-webkit-slider-thumb]:h-2.5 [&::-webkit-slider-thumb]:w-[5px] [&::-webkit-slider-thumb]:appearance-none [&::-webkit-slider-thumb]:bg-white"
        />
        <button aria-label="放大">
          <Icon w={7} h={7}>
            <path d="M0 3h3V0h1v3h3v1H4v3H3V4H0z" fill="#fff" />
          </Icon>
        </button>
        <button className="ml-2 flex items-center gap-1.5 text-[8px] leading-3">
          85%
          <Icon w={4} h={3}>
            <path d="M0 0h4L2 2.600z" fill="#8f8a92" />
          </Icon>
        </button>
        <button aria-label="页面边界" className="ml-2">
          <Icon w={12} h={12}>
            <path d="M1 1h10v10H1zM3.500 3.500h5v5h-5z" fill="none" stroke="#e3e5ec" strokeWidth="1" />
          </Icon>
        </button>
        <button aria-label="网格" className="ml-2">
          <Icon w={12} h={12}>
            <path d="M1 1.500h10v9H1zM4.300 1.500v9M7.700 1.500v9M1 6h10" fill="none" stroke="#a4aaba" strokeWidth="1" />
          </Icon>
        </button>
      </div>
    </footer>
  );
}

export default function App() {
  return (
    <div className="flex min-h-screen -scale-x-100 flex-col bg-white font-['Liberation_Sans','Noto_Sans_CJK_SC',sans-serif]">
      <TopBar />
      <div className="flex flex-1">
        <Workspace />
        <FormatPanel />
      </div>
      <StatusBar />
    </div>
  );
}
